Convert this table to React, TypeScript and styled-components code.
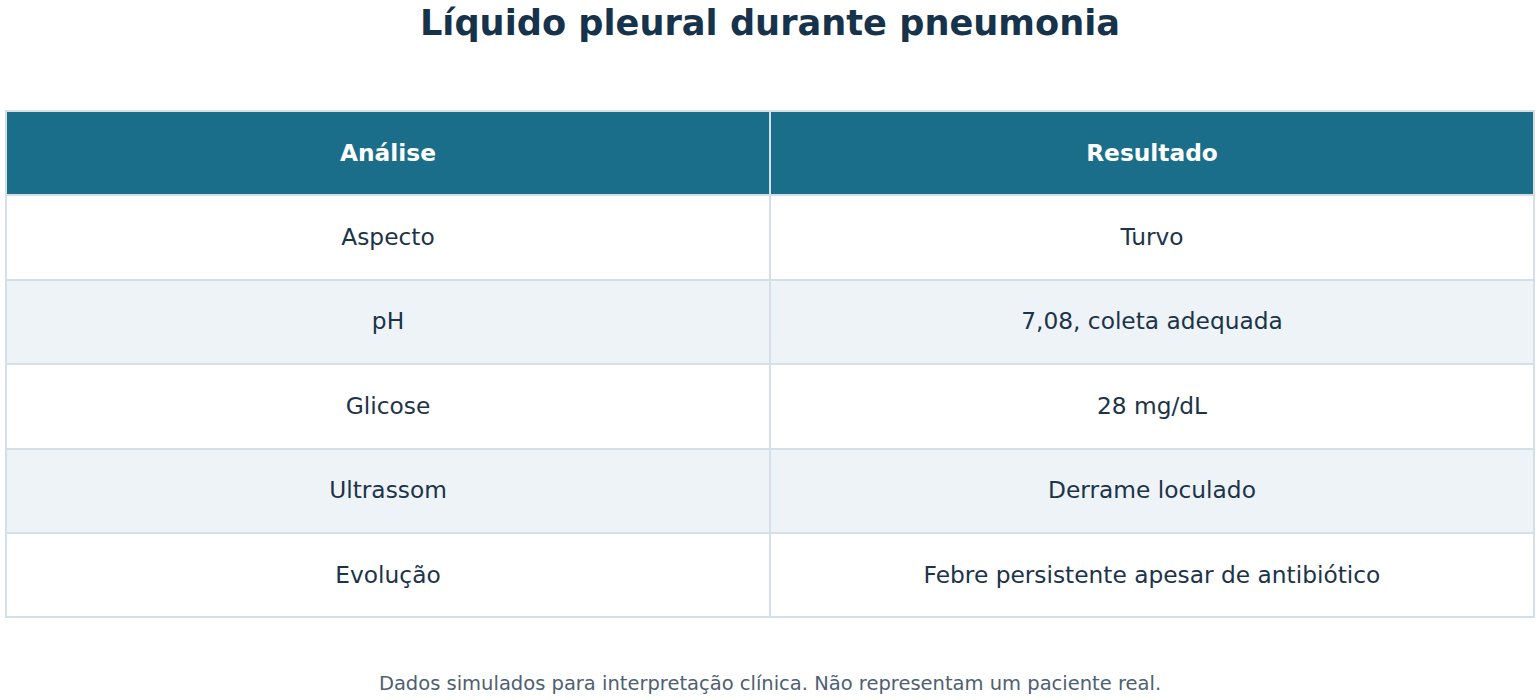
import React from "react";
import styled, { createGlobalStyle } from "styled-components";

const Global = createGlobalStyle`
  html, body { margin: 0; padding: 0; background: #ffffff; }
  body { font-family: "DejaVu Sans", Verdana, sans-serif; }
`;

const Page = styled.div`
  padding: 0 5px;
  display: flex;
  flex-direction: column;
  align-items: stretch;
`;

const Title = styled.h1`
  margin: 0;
  height: 110px;
  text-align: center;
  font-size: 35.2px;
  line-height: 45px;
  font-weight: 700;
  color: #17334b;
`;

const Table = styled.table`
  width: 100%;
  border-collapse: collapse;
  border: 2px solid #d5dfe7;
  table-layout: fixed;
`;

const Th = styled.th`
  background: #1a6e89;
  color: #ffffff;
  font-size: 23.3px;
  font-weight: 700;
  height: 80.4px;
  padding: 0 0 2px;
  text-align: center;
  border: 2px solid #d5dfe7;
`;

const Row = styled.tr<{ $alt: boolean }>`
  background: ${(p) => (p.$alt ? "#eef3f7" : "#ffffff")};
`;

const Td = styled.td`
  font-size: 23.3px;
  color: #1c3449;
  height: 80.4px;
  padding: 0 0 2px;
  text-align: center;
  border: 2px solid #d5dfe7;
`;

const Note = styled.p`
  margin: 54px 0 0;
  text-align: center;
  font-size: 19.5px;
  color: #4e6072;
`;

const rows: [string, string][] = [
  ["Aspecto", "Turvo"],
  ["pH", "7,08, coleta adequada"],
  ["Glicose", "28 mg/dL"],
  ["Ultrassom", "Derrame loculado"],
  ["Evolução", "Febre persistente apesar de antibiótico"],
];

export default function App() {
  return (
    <Page>
      <Global />
      <Title>Líquido pleural durante pneumonia</Title>
      <Table>
        <thead>
          <tr>
            <Th>Análise</Th>
            <Th>Resultado</Th>
          </tr>
        </thead>
        <tbody>
          {rows.map(([a, b], i) => (
            <Row key={a} $alt={i % 2 === 1}>
              <Td>{a}</Td>
              <Td>{b}</Td>
            </Row>
          ))}
        </tbody>
      </Table>
      <Note>Dados simulados para interpretação clínica. Não representam um paciente real.</Note>
    </Page>
  );
}
